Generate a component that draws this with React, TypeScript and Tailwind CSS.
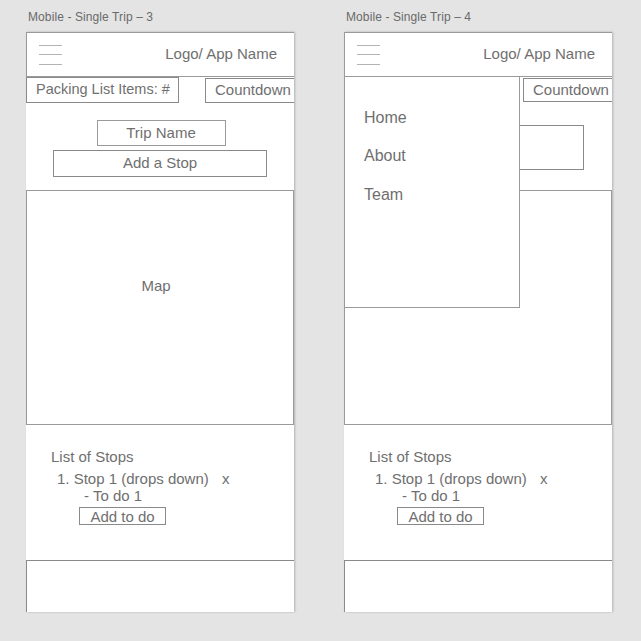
import React from "react";

const font = { fontFamily: '"Liberation Sans", Arial, Helvetica, sans-serif' };

function Hamburger() {
  return (
    <div className="flex w-[23px] flex-col gap-[8.5px]">
      <div className="h-px bg-[#b4b4b4]" />
      <div className="h-px bg-[#b4b4b4]" />
      <div className="h-px bg-[#b4b4b4]" />
    </div>
  );
}

function Header() {
  return (
    <div className="flex h-[44px] items-center justify-between border-b border-[#9a9a9a] pl-[12px] pr-[17px]">
      <Hamburger />
      <span className="text-[15px] text-[#6f6f6f]">Logo/ App Name</span>
    </div>
  );
}

function ListOfStops() {
  return (
    <div className="h-[135px] pl-[25px] pt-[23px] text-[#6f6f6f]">
      <div className="text-[15px] leading-[18px]">List of Stops</div>
      <div className="mt-[4px] flex pl-[6px] text-[15px] leading-[18px]">
        <span className="w-[165px]">1. Stop 1 (drops down)</span>
        <span>x</span>
      </div>
      <div className="pl-[33px] text-[15px] leading-[16px]">- To do 1</div>
      <div className="ml-[28px] mt-[3px] flex h-[18px] w-[87px] items-center justify-center border border-[#8a8a8a] text-[15px] leading-none">
        Add to do
      </div>
    </div>
  );
}

function Frame({ label, menu }: { label: string; menu?: boolean }) {
  return (
    <div className="flex flex-col">
      <div className="h-[32px] pl-[2px] pt-[11px] text-[12px] leading-[12px] tracking-[0.1px] text-[#6a6a6a]">{label}</div>
      <div className="relative h-[580px] w-[268px] bg-white shadow-[1px_0_2px_rgba(0,0,0,0.22)]">
        <div className="border-l border-t border-[#9a9a9a]">
          <Header />
        </div>

        {menu ? (
          <div className="h-[113px]">
            <div className="flex justify-end pt-[1px]">
              <div className="flex h-[24px] w-[89px] items-center border border-r-0 border-[#8a8a8a] pl-[9px] text-[15px] text-[#6f6f6f]">
                Countdown
              </div>
            </div>
            <div className="ml-[100px] mt-[23px] h-[45px] w-[140px] border border-[#8a8a8a]" />
          </div>
        ) : (
          <div className="h-[113px]">
            <div className="flex items-start justify-between">
              <div className="flex h-[26px] w-[153px] items-center border border-[#8a8a8a] pl-[9px] text-[14.5px] text-[#6f6f6f]">
                Packing List Items: #
              </div>
              <div className="mt-[1px] flex h-[25px] w-[89px] items-center border border-r-0 border-[#8a8a8a] pl-[9px] text-[15px] text-[#6f6f6f]">
                Countdown
              </div>
            </div>
            <div className="mt-[17px] flex flex-col items-center gap-[4px] text-[15px] text-[#6f6f6f]">
              <div className="ml-[2px] flex h-[26px] w-[129px] items-center justify-center border border-[#9a9a9a]">
                Trip Name
              </div>
              <div className="flex h-[27px] w-[214px] items-center justify-center border border-[#8a8a8a]">
                Add a Stop
              </div>
            </div>
          </div>
        )}

        <div className="flex h-[235px] items-center justify-center border border-[#9a9a9a] pb-[42px] pr-[8px] text-[15px] text-[#6f6f6f]">
          {menu ? "" : "Map"}
        </div>

        <ListOfStops />

        <div className="h-[52px] border-l border-t border-[#8a8a8a]" />

        {menu && (
          <div className="absolute left-0 top-[45px] h-[231px] w-[176px] border-b border-l border-r border-[#9a9a9a] bg-white pl-[19px] pt-[31px] text-[16px] text-[#6f6f6f]">
            <div className="leading-[20px]">Home</div>
            <div className="mt-[18px] leading-[20px]">About</div>
            <div className="mt-[19px] leading-[20px]">Team</div>
          </div>
        )}
      </div>
    </div>
  );
}

export default function App() {
  return (
    <div className="flex h-[641px] w-[641px] gap-[50px] bg-[#e4e4e4] pl-[26px]" style={font}>
      <Frame label="Mobile - Single Trip – 3" />
      <Frame label="Mobile - Single Trip – 4" menu />
    </div>
  );
}
